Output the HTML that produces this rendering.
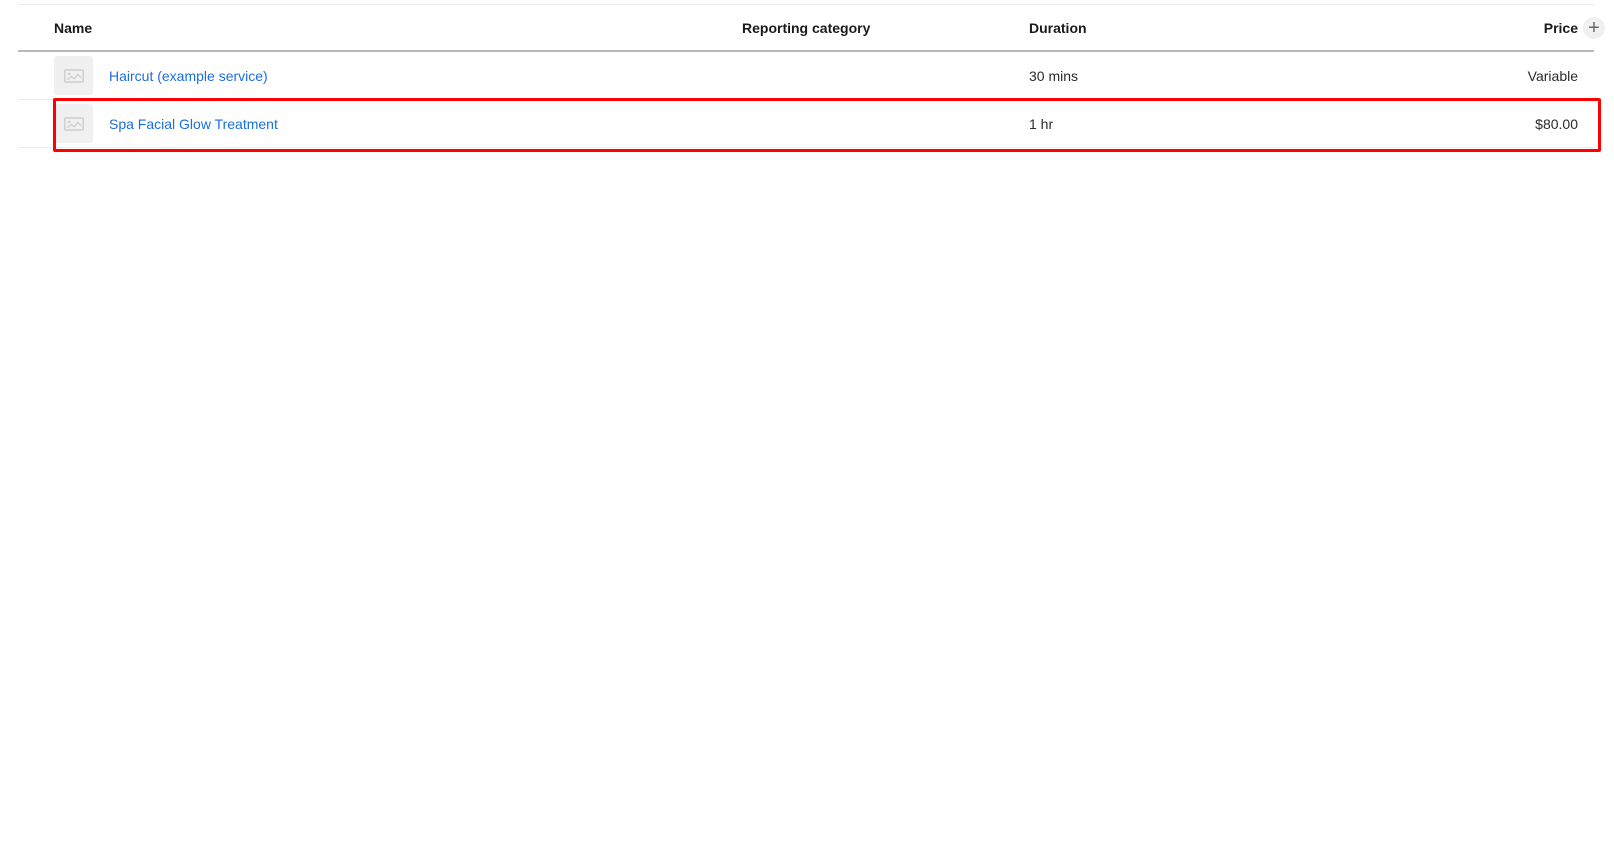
<!DOCTYPE html>
<html><head><style>
body{margin:0;width:1614px;height:851px;background:#fff;font-family:"Liberation Sans",sans-serif;font-size:14px;color:#2a2a2a;position:relative;overflow:hidden}
.a{position:absolute}
.hl{position:absolute;left:18px;width:1576px}
.th{font-weight:bold;top:20px;color:#1a1a1a}
.thumb{position:absolute;left:54px;width:39px;height:39px;background:#f0f0f0;border-radius:3px}
.thumb svg{position:absolute;left:10px;top:13px}
.lnk{color:#1a6fe0}
</style></head><body>
<div class="hl" style="top:4px;height:1px;background:#ececec"></div>
<div class="a th" style="left:54px">Name</div>
<div class="a th" style="left:742px">Reporting category</div>
<div class="a th" style="left:1029px">Duration</div>
<div class="a th" style="right:36px">Price</div>
<div class="a" style="left:1583px;top:17px;width:22px;height:22px;border-radius:50%;background:#f0f0f0;color:#666;font-size:20px;line-height:22px;text-align:center">+</div>
<div class="hl" style="top:50px;height:2px;background:#b8b8b8"></div>

<div class="thumb" style="top:56px"><svg width="20" height="14" viewBox="0 0 19 13"><rect x="0.75" y="0.75" width="17.5" height="11.5" rx="1" fill="none" stroke="#d0d0d0" stroke-width="1.5"/><circle cx="5" cy="4.5" r="1.3" fill="#d0d0d0"/><path d="M3 10l4-3 3 2 3-4 3 3" fill="none" stroke="#d0d0d0" stroke-width="1.3"/></svg></div>
<div class="a lnk" style="left:109px;top:68px">Haircut (example service)</div>
<div class="a" style="left:1029px;top:68px">30 mins</div>
<div class="a" style="right:36px;top:68px">Variable</div>
<div class="hl" style="top:99px;height:1px;background:#ececec"></div>

<div class="thumb" style="top:104px"><svg width="20" height="14" viewBox="0 0 19 13"><rect x="0.75" y="0.75" width="17.5" height="11.5" rx="1" fill="none" stroke="#d0d0d0" stroke-width="1.5"/><circle cx="5" cy="4.5" r="1.3" fill="#d0d0d0"/><path d="M3 10l4-3 3 2 3-4 3 3" fill="none" stroke="#d0d0d0" stroke-width="1.3"/></svg></div>
<div class="a lnk" style="left:109px;top:116px">Spa Facial Glow Treatment</div>
<div class="a" style="left:1029px;top:116px">1 hr</div>
<div class="a" style="right:36px;top:116px">$80.00</div>
<div class="hl" style="top:147px;height:1px;background:#ececec"></div>

<div class="a" style="left:53px;top:98px;width:1542px;height:48px;border:3px solid #f00;border-radius:2px"></div>
</body></html>
